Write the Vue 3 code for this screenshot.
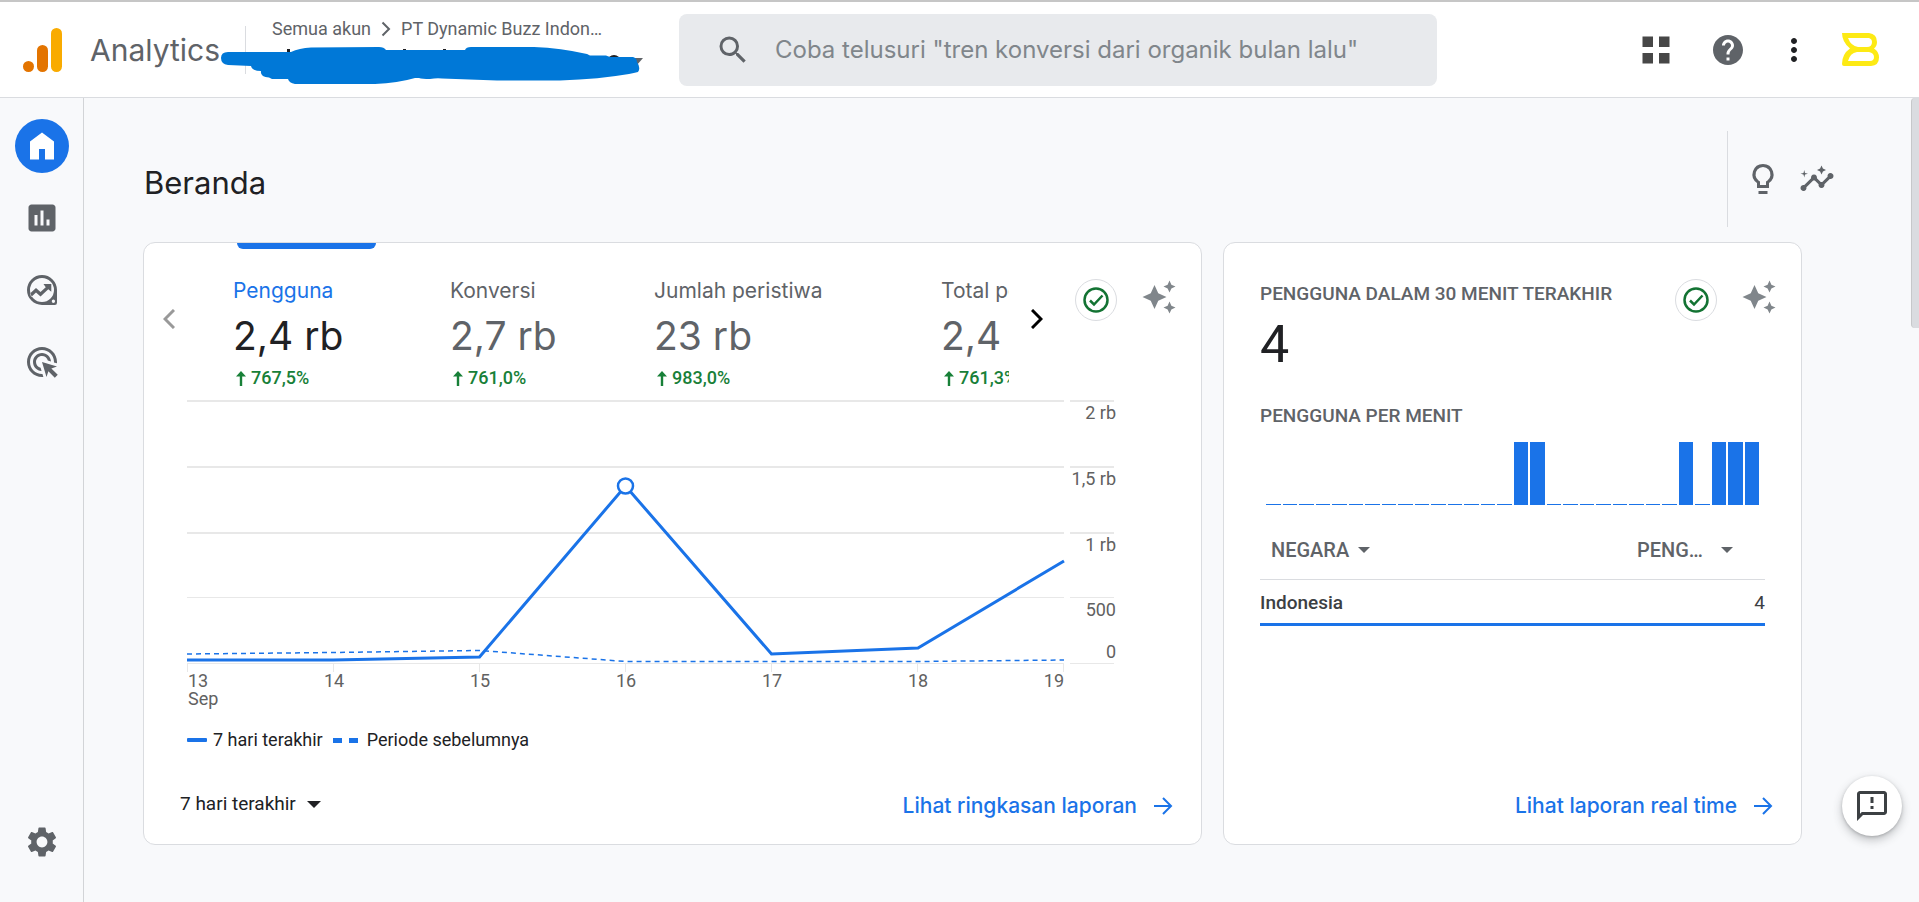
<script setup>
import { ref } from 'vue'

const icons = {
  home: 'M4 21V9l8-6 8 6v12h-6v-7h-4v7z',
  reports: 'M19 3H5c-1.100 0-2 .9-2 2v14c0 1.100.9 2 2 2h14c1.100 0 2-.9 2-2V5c0-1.100-.9-2-2-2zM9 17H7v-7h2v7zm4 0h-2V7h2v10zm4 0h-2v-4h2v4z',
  explore: 'M12 2a10 10 0 1 0 0 20h8.500a1.500 1.500 0 0 0 1.500-1.500V12A10 10 0 0 0 12 2zM12 4a8 8 0 1 1 0 16a8 8 0 0 1 0-16zM19.600 18.400a1.100 1.100 0 1 1 0 2.200a1.100 1.100 0 0 1 0-2.200zM4 14.400l4-3.800 3 2.800 3.500-3.300L13 8h5.200v5.200l-2-1.700-5.200 4.900-3-2.800-3.200 3z',
  ads: 'M11.710 17.990C8.530 17.840 6 15.220 6 12c0-3.310 2.690-6 6-6 3.220 0 5.840 2.530 5.990 5.710l-2.100-.63C15.480 9.310 13.890 8 12 8c-2.210 0-4 1.790-4 4 0 1.890 1.310 3.480 3.080 3.890l.63 2.100zM22 12c0 .3-.01.6-.04.9l-1.970-.59c.01-.1.01-.21.01-.31 0-4.420-3.580-8-8-8s-8 3.580-8 8 3.580 8 8 8c.1 0 .21 0 .31-.01l.59 1.970c-.3.03-.6.04-.9.04-5.520 0-10-4.480-10-10S6.480 2 12 2s10 4.480 10 10zm-3.770 4.260L22 15l-10-3 3 10 1.260-3.770 4.270 4.270 1.980-1.980-4.280-4.260z',
  settings: 'M19.140 12.940c.04-.3.06-.61.06-.94 0-.32-.02-.64-.07-.94l2.030-1.580c.18-.14.23-.41.12-.61l-1.920-3.320c-.12-.22-.37-.29-.59-.22l-2.390.96c-.5-.38-1.030-.7-1.620-.94l-.36-2.540c-.04-.24-.24-.41-.48-.41h-3.840c-.24 0-.43.17-.47.41l-.36 2.540c-.59.24-1.130.57-1.620.94l-2.390-.96c-.22-.08-.47 0-.59.22L2.740 8.870c-.12.21-.08.47.12.61l2.030 1.580c-.05.3-.09.63-.09.94s.02.64.07.94l-2.030 1.580c-.18.14-.23.41-.12.61l1.920 3.320c.12.22.37.29.59.22l2.390-.96c.5.38 1.030.7 1.620.94l.36 2.540c.05.24.24.41.48.41h3.840c.24 0 .44-.17.47-.41l.36-2.540c.59-.24 1.130-.56 1.620-.94l2.390.96c.22.08.47 0 .59-.22l1.920-3.320c.12-.22.07-.47-.12-.61l-2.010-1.580zM12 15.600c-1.980 0-3.600-1.620-3.600-3.600s1.620-3.600 3.600-3.600 3.600 1.620 3.600 3.600-1.620 3.600-3.600 3.600z',
  search: 'M15.500 14h-.79l-.28-.27A6.471 6.471 0 0 0 16 9.500 6.500 6.500 0 1 0 9.500 16c1.610 0 3.090-.59 4.230-1.570l.27.28v.79l5 4.990L20.490 19l-4.990-5zm-6 0C7.010 14 5 11.990 5 9.500S7.010 5 9.500 5 14 7.010 14 9.500 11.990 14 9.500 14z',
  apps: 'M3 3h7v7H3zM14 3h7v7h-7zM3 14h7v7H3zM14 14h7v7h-7z',
  help: 'M12 2C6.480 2 2 6.480 2 12s4.480 10 10 10 10-4.480 10-10S17.520 2 12 2zm1 17h-2v-2h2v2zm2.070-7.750l-.9.92C13.450 12.900 13 13.500 13 15h-2v-.5c0-1.100.45-2.100 1.170-2.830l1.240-1.260c.37-.36.59-.86.59-1.410 0-1.100-.9-2-2-2s-2 .9-2 2H8c0-2.210 1.790-4 4-4s4 1.790 4 4c0 .88-.36 1.680-.93 2.250z',
  more: 'M12 8c1.100 0 2-.9 2-2s-.9-2-2-2-2 .9-2 2 .9 2 2 2zm0 2c-1.100 0-2 .9-2 2s.9 2 2 2 2-.9 2-2-.9-2-2-2zm0 6c-1.100 0-2 .9-2 2s.9 2 2 2 2-.9 2-2-.9-2-2-2z',
  bulb: 'M12 2a7 7 0 0 0-4 12.740V18h8v-3.260A7 7 0 0 0 12 2zM14.850 13.100l-.85.6V16h-4v-2.300l-.85-.6a5 5 0 1 1 5.700 0zM9 20h6v2H9z',
  insights: 'M21 8c-1.450 0-2.260 1.440-1.930 2.510l-3.550 3.560c-.3-.09-.74-.09-1.040 0l-2.550-2.550C12.270 10.450 11.460 9 10 9c-1.450 0-2.270 1.440-1.930 2.520l-4.560 4.550C2.440 15.740 1 16.550 1 18c0 1.100.9 2 2 2 1.450 0 2.260-1.440 1.930-2.510l4.550-4.560c.3.09.74.09 1.040 0l2.550 2.550C12.730 16.550 13.540 18 15 18c1.450 0 2.270-1.440 1.930-2.520l3.560-3.550C21.560 12.260 23 11.450 23 10c0-1.100-.9-2-2-2zM15 9l.94-2.070L18 6l-2.060-.93L15 3l-.92 2.070L12 6l2.080.93zM3.500 11L4 9l2-.5L4 8l-.5-2L3 8l-2 .5L3 9z',
  sparkle: 'M19 9l1.250-2.750L23 5l-2.750-1.250L19 1l-1.250 2.750L15 5l2.750 1.250L19 9zm-7.500.5L9 4 6.500 9.500 1 12l5.500 2.500L9 20l2.500-5.500L17 12l-5.500-2.500zM19 15l-1.250 2.750L15 19l2.750 1.250L19 23l1.250-2.750L23 19l-2.750-1.250L19 15z',
  feedback: 'M20 2H4c-1.100 0-2 .9-2 2v18l4-4h14c1.100 0 2-.9 2-2V4c0-1.100-.9-2-2-2zM20 16H5.200L4 17.200V4h16zM11 6h2v4h-2zM11 12h2v2h-2z',
}

const nav = [
  { icon: 'home', label: 'Beranda', active: true },
  { icon: 'reports', label: 'Laporan' },
  { icon: 'explore', label: 'Jelajahi' },
  { icon: 'ads', label: 'Iklan' },
]

const metrics = [
  { label: 'Pengguna', value: '2,4 rb', delta: '767,5%' },
  { label: 'Konversi', value: '2,7 rb', delta: '761,0%' },
  { label: 'Jumlah peristiwa', value: '23 rb', delta: '983,0%' },
  { label: 'Total pendapatan', value: '2,4 rb', delta: '761,3%' },
]
const selected = ref(0)

const gridLines = [
  { y: 3, w: 2, label: '2 rb', ly: 21 },
  { y: 69, w: 2, label: '1,5 rb', ly: 87 },
  { y: 135, w: 2, label: '1 rb', ly: 153 },
  { y: 199.5, w: 1, label: '500', ly: 218 },
  { y: 265.5, w: 1, label: '0', ly: 260 },
]
const days = [13, 14, 15, 16, 17, 18, 19]
const dayX = (i) => i * 146 + 1
const dayAnchor = (i) => (i === 0 ? 'start' : i === 6 ? 'end' : 'middle')

const minutes = Array.from({ length: 30 }, (_, i) => ([15, 16, 25, 27, 28, 29].includes(i) ? 1 : 0))
const period = ref('7')
const query = ref('')
</script>

<template>
  <div class="page">
    <header class="topbar">
      <div class="brand">
        <svg class="logo" viewBox="0 0 39 44" aria-hidden="true">
          <circle cx="5.500" cy="38.500" r="5.500" fill="#e37400" />
          <rect x="14" y="17" width="11" height="27" rx="5.500" fill="#e37400" />
          <rect x="28" y="0" width="11" height="44" rx="5.500" fill="#f9ab00" />
        </svg>
        <span class="product">Analytics</span>
        <div class="account">
          <nav class="crumbs" aria-label="Akun">
            <a href="#">Semua akun</a>
            <svg viewBox="0 0 10 16" aria-hidden="true"><path d="M1.500 1.500L8 8l-6.500 6.500" /></svg>
            <a href="#">PT Dynamic Buzz Indon…</a>
          </nav>
        </div>
        <svg class="scribble" viewBox="220 46 424 38" aria-hidden="true">
          <path fill="#202124" d="M287 49h3v4h-3zM403 49h3v3h-3zM443 49h3v3h-3zM609 57q5-4 10 0z" />
          <path fill="#5f6368" d="M630 58h13l-6 7z" />
          <path fill="#0078d7" d="M221 58Q221 52 228 52H291Q299 48 311 47.500L379 47Q384 47 386 50H465Q466 47 471 47H534Q561 48 587 54L590 55.500H606L610 57H633Q637 58 637 62Q641 68 638 72Q634 73 629 74Q600 79 560 80.500H497L442 78.500Q436 78 430 79Q422 79 419 78H415Q398 83 375 84H295Q289 83 288 79H272L269 77.500Q260 77 261 71Q252 71 251 66L228 65Q221 64 221 58Z" />
        </svg>
      </div>

      <label class="search">
        <svg class="ico" viewBox="0 0 24 24" aria-hidden="true"><path :d="icons.search" /></svg>
        <input v-model="query" type="text" aria-label="Telusuri" placeholder='Coba telusuri "tren konversi dari organik bulan lalu"' />
      </label>

      <div class="topactions">
        <button class="apps" type="button" aria-label="Aplikasi"><svg class="ico" viewBox="0 0 24 24"><path :d="icons.apps" /></svg></button>
        <button type="button" aria-label="Bantuan"><svg class="ico" viewBox="0 0 24 24"><path :d="icons.help" /></svg></button>
        <button class="more" type="button" aria-label="Lainnya"><svg class="ico" viewBox="0 0 24 24"><path :d="icons.more" /></svg></button>
        <button type="button" aria-label="Profil">
          <svg class="avatar" viewBox="0 0 37 33"><path fill="#fdea14" fill-rule="evenodd" d="M0 0h27q8 1 8 9q0 4-3 6.500q5 3 5 9q0 8-8 8.500H2q-2 0-2-2q0-10 8-15.500Q0 9 0 0zM6 5h21q3 1 3 4q0 5-5 5H16q-7-1-10-9zM6 28q2-8 9-9h12q5 1 5 5q0 4-4 4z" /></svg>
        </button>
      </div>
    </header>

    <div class="body">
      <nav class="rail" aria-label="Navigasi utama">
        <button v-for="n in nav" :key="n.icon" type="button" :class="{ active: n.active }" :aria-label="n.label">
          <svg class="ico" viewBox="0 0 24 24"><path fill-rule="evenodd" :d="icons[n.icon]" /></svg>
        </button>
        <button class="bottom" type="button" aria-label="Admin"><svg class="ico" viewBox="0 0 24 24"><path :d="icons.settings" /></svg></button>
      </nav>

      <main>
        <div class="titlebar">
          <h1>Beranda</h1>
          <div class="tools">
            <button type="button" aria-label="Saran"><svg class="ico" viewBox="0 0 24 24"><path fill-rule="evenodd" :d="icons.bulb" /></svg></button>
            <button type="button" aria-label="Insight"><svg class="ico" viewBox="0 0 24 24"><path :d="icons.insights" /></svg></button>
          </div>
        </div>

        <div class="cards">
          <section class="card">
            <div class="metrics">
              <button class="step prev" type="button" aria-label="Sebelumnya"><svg viewBox="0 0 12 20"><path d="M11 1L2 10l9 9" /></svg></button>
              <div class="tabs">
                <button v-for="(m, i) in metrics" :key="m.label" type="button" :class="['tab', { on: selected === i }]" @click="selected = i">
                  <span class="name">{{ m.label }}</span>
                  <span class="value">{{ m.value }}</span>
                  <span class="delta">
                    <svg viewBox="0 0 10 15" aria-hidden="true"><path d="M5 0l5 5.500H6.200V15H3.800V5.500H0z" /></svg>{{ m.delta }}
                  </span>
                </button>
              </div>
              <button class="step" type="button" aria-label="Berikutnya"><svg viewBox="0 0 12 20"><path d="M1 1l9 9-9 9" /></svg></button>
              <div class="badges">
                <button class="ok" type="button" aria-label="Kualitas data"><svg viewBox="0 0 26 26"><circle cx="13" cy="13" r="11.500" /><path d="M7 13.500l4 4 8.500-9" /></svg></button>
                <button type="button" aria-label="Insight"><svg class="ico" viewBox="0 0 24 24"><path :d="icons.sparkle" /></svg></button>
              </div>
            </div>

            <svg class="chart" viewBox="0 0 932 312" role="img" aria-label="Pengguna per hari">
              <g v-for="g in gridLines" :key="g.label">
                <path class="grid" :d="`M0 ${g.y}H877M883 ${g.y}H927`" :stroke-width="g.w" />
                <text x="929" :y="g.ly" text-anchor="end">{{ g.label }}</text>
              </g>
              <g v-for="(d, i) in days" :key="d">
                <path class="grid" :d="`M${i * 146 + 0.5} 266v8`" />
                <text :x="dayX(i)" y="289" :text-anchor="dayAnchor(i)">{{ d }}</text>
              </g>
              <text x="1" y="307">Sep</text>
              <path class="prev-line" d="M0 256L146 254.500L293 252.500L439 263.500H731L877 262" />
              <path class="line" d="M0 262H146L292.500 259L438.500 88L584.500 256L731 250L877 163" />
              <circle cx="438.500" cy="88" r="7.500" />
            </svg>

            <div class="legend">
              <span class="swatch"></span><span>7 hari terakhir</span>
              <span class="swatch dashed"></span><span>Periode sebelumnya</span>
            </div>

            <div class="foot">
              <label class="period">
                <select v-model="period" aria-label="Rentang waktu">
                  <option value="7">7 hari terakhir</option>
                  <option value="28">28 hari terakhir</option>
                </select>
                <span class="caret dark"></span>
              </label>
              <a href="#">Lihat ringkasan laporan
                <svg viewBox="0 0 19 18" aria-hidden="true"><path d="M0 9h17M9 1l8 8-8 8" /></svg>
              </a>
            </div>
          </section>

          <section class="card">
            <div class="livehead">
              <div>
                <h2>PENGGUNA DALAM 30 MENIT TERAKHIR</h2>
                <p class="live">4</p>
              </div>
              <div class="badges">
                <button class="ok" type="button" aria-label="Kualitas data"><svg viewBox="0 0 26 26"><circle cx="13" cy="13" r="11.500" /><path d="M7 13.500l4 4 8.500-9" /></svg></button>
                <button type="button" aria-label="Insight"><svg class="ico" viewBox="0 0 24 24"><path :d="icons.sparkle" /></svg></button>
              </div>
            </div>
            <div class="livebody">
              <h2>PENGGUNA PER MENIT</h2>
              <div class="bars"><i v-for="(m, i) in minutes" :key="i" :class="{ full: m }"></i></div>
              <table>
                <thead>
                  <tr>
                    <th scope="col"><button type="button">NEGARA<span class="caret"></span></button></th>
                    <th scope="col" class="num"><button type="button">PENG…<span class="caret"></span></button></th>
                  </tr>
                </thead>
                <tbody>
                  <tr><td>Indonesia</td><td class="num">4</td></tr>
                </tbody>
              </table>
            </div>
            <div class="foot">
              <span></span>
              <a href="#">Lihat laporan real time
                <svg viewBox="0 0 19 18" aria-hidden="true"><path d="M0 9h17M9 1l8 8-8 8" /></svg>
              </a>
            </div>
          </section>
        </div>
        <div class="scrollbar"></div>
        <button class="fab" type="button" aria-label="Kirim masukan"><svg class="ico" viewBox="0 0 24 24"><path fill-rule="evenodd" :d="icons.feedback" /></svg></button>
      </main>
    </div>
  </div>
</template>

<style>
body { margin: 0; background: #f8f9fb; }
</style>

<style scoped>
* { box-sizing: border-box; }
.page { display: flex; flex-direction: column; min-height: 100vh; background: #f8f9fb; font-family: Roboto, "Liberation Sans", sans-serif; color: #202124; }
button { display: flex; align-items: center; justify-content: center; padding: 0; border: 0; background: none; font: inherit; color: inherit; cursor: pointer; }
a { color: inherit; text-decoration: none; }
svg { display: block; flex: none; }
.ico { width: 36px; height: 36px; fill: currentColor; }

.topbar { display: flex; align-items: center; height: 98px; border-top: 2px solid #c6c6c6; border-bottom: 1px solid #dadce0; background: #fff; }
.brand { position: relative; display: flex; flex: 0 0 679px; align-items: center; align-self: stretch; padding-left: 23px; }
.logo { width: 39px; height: 44px; }
.product { margin-left: 28px; font: 30px/40px Inter, sans-serif; color: #5f6368; }
.account { display: flex; align-items: flex-start; height: 48px; margin-left: 25px; padding-left: 26px; border-left: 1px solid #dadce0; }
.crumbs { display: flex; align-items: center; gap: 10px; height: 24px; margin-top: -9px; font-size: 18px; line-height: 24px; color: #5f6368; white-space: nowrap; }
.crumbs svg { width: 10px; height: 16px; fill: none; stroke: #5f6368; stroke-width: 2; }
.scribble { position: absolute; left: 220px; top: 44px; width: 424px; height: 38px; }
.search { display: flex; flex: 1; align-items: center; gap: 24px; height: 72px; padding: 0 36px; border-radius: 8px; background: #e8eaed; color: #5f6368; }
.search input { flex: 1; min-width: 0; height: 48px; padding: 0; border: 0; outline: 0; background: none; font: 24px Inter, sans-serif; color: #202124; }
.search input::placeholder { color: #80868b; opacity: 1; }
.topactions { display: flex; flex: 0 0 482px; align-items: center; justify-content: flex-end; gap: 30px; padding-right: 40px; color: #5f6368; }
.apps { width: 48px; color: #474747; }
.more { color: #202124; }
.avatar { width: 37px; height: 33px; }

.body { display: flex; flex: 1; }
.rail { display: flex; flex: 0 0 84px; flex-direction: column; align-items: center; gap: 18px; padding: 21px 0 34px; border-right: 1px solid #d2d4d7; color: #5f6368; }
.rail button { width: 54px; height: 54px; border-radius: 50%; }
.rail .active { background: #1a73e8; color: #fff; }
.rail .bottom { margin-top: auto; }

main { position: relative; flex: 1; min-width: 0; padding-bottom: 58px; }
.titlebar { display: flex; align-items: center; justify-content: space-between; padding: 33px 84px 15px 60px; }
h1 { margin: 8px 0 0; font: 31px/40px Inter, sans-serif; color: #202124; }
.tools { display: flex; align-items: center; gap: 18px; height: 96px; padding-left: 17px; border-left: 1px solid #dadce0; color: #5f6368; }

.cards { display: grid; grid-template-columns: 1059fr 579fr; gap: 21px; padding: 0 117px 0 59px; }
.card { display: flex; flex-direction: column; min-width: 0; min-height: 603px; border: 1px solid #dadce0; border-radius: 12px; background: #fff; }
.metrics { display: flex; align-items: flex-start; padding-right: 24px; }
.step { flex: none; width: 56px; height: 48px; margin-top: 52px; color: #000; }
.step svg { width: 12px; height: 20px; fill: none; stroke: currentColor; stroke-width: 3; }
.prev { width: 50px; margin-right: 39px; color: #999; }
.tabs { display: grid; flex: 1; min-width: 0; grid-template-columns: 217px 204px 287px 217px; overflow: hidden; }
.tab { position: relative; flex-direction: column; align-items: flex-start; justify-content: flex-start; padding-top: 34px; color: #5f6368; white-space: nowrap; }
.name { font: 21px/28px Inter, sans-serif; }
.value { margin-top: 7px; font: 39px/48px Inter, sans-serif; }
.delta { display: flex; align-items: center; gap: 5px; margin: 6px 0 0 3px; font-size: 18px; font-weight: 500; line-height: 24px; color: #188038; }
.delta svg { width: 10px; height: 15px; fill: currentColor; }
.on::before { position: absolute; top: 0; left: 4px; width: 139px; height: 6px; border-radius: 0 0 6px 6px; background: #1a73e8; content: ""; }
.on .name { color: #1a73e8; }
.on .value { color: #202124; }
.badges { display: flex; gap: 24px; align-items: flex-start; margin-top: 36px; color: #80868b; }
.metrics .badges { margin-left: 10px; }
.ok { width: 42px; height: 42px; border: 1px solid #dadce0; border-radius: 50%; }
.ok svg { width: 26px; height: 26px; fill: none; stroke: #137333; stroke-width: 2.500; }

.chart { width: auto; margin: 8px 82px 0 43px; overflow: visible; }
.chart text { font-size: 18px; fill: #616161; }
.grid { stroke: #e8e8e8; }
.line { fill: none; stroke: #1a73e8; stroke-width: 3; }
.prev-line { fill: none; stroke: #1a73e8; stroke-width: 1.500; stroke-dasharray: 5 4; }
.chart circle { fill: #fff; stroke: #1a73e8; stroke-width: 2.500; }
.legend { display: flex; align-items: center; margin: 18px 0 0 43px; font-size: 18px; line-height: 24px; color: #202124; }
.swatch { width: 20px; height: 4px; margin-right: 6px; border-radius: 1px; background: #1a73e8; }
.dashed { width: 25px; height: 5px; margin: 0 9px 0 10px; border-radius: 0; background: linear-gradient(90deg, #1a73e8 0 9px, transparent 9px 16px, #1a73e8 16px); }
.foot { display: flex; align-items: flex-start; justify-content: space-between; margin-top: auto; padding: 0 28px 24px 36px; }
.foot a { display: flex; align-items: center; gap: 17px; font: 500 21px/28px Inter, sans-serif; color: #1a73e8; }
.foot a svg { width: 19px; height: 18px; fill: none; stroke: currentColor; stroke-width: 2; }
.period { display: flex; align-items: center; gap: 11px; }
.period select { appearance: none; padding: 0; border: 0; background: none; font: 19px/24px Roboto, sans-serif; color: #202124; field-sizing: content; }
.caret { border: solid transparent; border-width: 6px 6px 0; border-top-color: #5f6368; }
.dark { border-width: 7px 7px 0; border-top-color: #202124; }

.livehead { display: flex; justify-content: space-between; padding: 0 24px 0 36px; }
h2 { margin: 0; font-size: 19px; font-weight: 500; line-height: 24px; color: #5f6368; }
.livehead h2 { margin-top: 39px; }
.live { margin: 9px 0 0; font-size: 52px; line-height: 60px; }
.livebody { padding: 29px 36px 24px 36px; }
.bars { display: flex; align-items: flex-end; gap: 2px; height: 63px; margin: 14px 6px 0; }
.bars i { flex: 1; height: 1px; background: #1a73e8; }
.bars .full { height: 100%; }
table { width: 100%; border-collapse: collapse; font-size: 19px; line-height: 24px; }
th { padding: 33px 11px 17px; border-bottom: 1px solid #dadce0; font-size: 20px; font-weight: 500; text-align: left; color: #5f6368; }
th button { gap: 9px; }
th.num { padding-right: 32px; }
th.num button { gap: 18px; margin-left: auto; }
td { padding: 11px 0 8px; border-bottom: 3px solid #1a73e8; font-weight: 500; color: #3c4043; }
td.num { font-weight: 400; text-align: right; }

.scrollbar { position: absolute; top: 0; right: 0; width: 8px; height: 230px; border-left: 1px solid #c6c8ca; border-radius: 4px 0 0 4px; background: #dadce0; }
.fab { position: absolute; right: 17px; bottom: 67px; width: 60px; height: 60px; border-radius: 50%; background: #fff; color: #3c4043; box-shadow: 0 4px 10px rgba(60, 64, 67, .3), 0 1px 3px rgba(60, 64, 67, .25); }
</style>
